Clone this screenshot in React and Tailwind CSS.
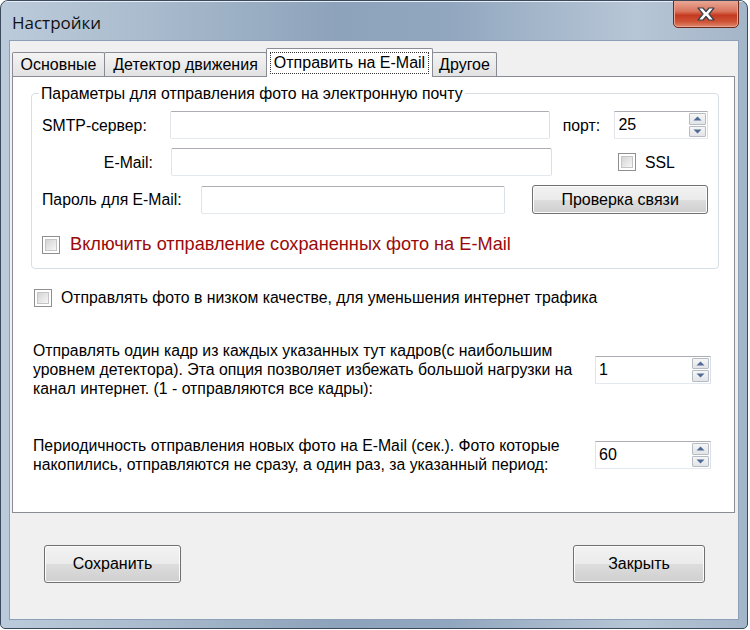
import React from "react";

function TextBox({ className = "" }) {
  return (
    <div
      className={`h-[28px] bg-white border border-[#abadb3] border-l-[#e2e3ea] border-r-[#dbdfe6] border-b-[#e3e9ef] rounded-[2px] ${className}`}
    />
  );
}

function Arrow({ up }) {
  return (
    <svg width="9" height="5" viewBox="0 0 9 5">
      {up ? (
        <path d="M0.5 4.5 L4.5 0.5 L8.5 4.5 Z" fill="#4f6a96" />
      ) : (
        <path d="M0.5 0.5 L4.5 4.5 L8.5 0.5 Z" fill="#4f6a96" />
      )}
    </svg>
  );
}

function Spinner({ className = "", value }) {
  return (
    <div
      className={`h-[28px] flex bg-white border border-[#abadb3] border-l-[#e2e3ea] border-r-[#dbdfe6] border-b-[#e3e9ef] ${className}`}
    >
      <div className="flex-1 pl-[3px] text-[16px] leading-[25px] text-black">{value}</div>
      <div className="w-[19px] flex flex-col p-[1px] gap-[1px]">
        <div className="flex-1 flex items-center justify-center border border-[#b6bcc6] rounded-[1px] bg-[linear-gradient(to_bottom,#f6f6f6,#e2e4e8)]">
          <Arrow up />
        </div>
        <div className="flex-1 flex items-center justify-center border border-[#b6bcc6] rounded-[1px] bg-[linear-gradient(to_bottom,#f6f6f6,#e2e4e8)]">
          <Arrow />
        </div>
      </div>
    </div>
  );
}

function Check() {
  return (
    <div className="w-[18px] h-[18px] shrink-0 border border-[#8e8f8f] bg-white p-[2px]">
      <div className="w-full h-full border border-[#c5c5c5] bg-[linear-gradient(135deg,#d4d4d4,#f7f7f7)]" />
    </div>
  );
}

function Btn({ className = "", children }) {
  return (
    <div
      className={`flex items-center justify-center border border-[#707070] rounded-[3px] shadow-[inset_0_0_0_1px_#fcfcfc] bg-[linear-gradient(to_bottom,#f2f2f2_0%,#ebebeb_50%,#dddddd_51%,#cfcfcf_100%)] text-[16px] text-black ${className}`}
    >
      {children}
    </div>
  );
}

export default function App() {
  return (
    <div className="w-[750px] h-[630px] bg-white font-['Liberation_Sans',Arial,sans-serif] text-black">
      <div className="w-[748px] h-[629px] flex flex-col rounded-t-[8px] rounded-b-[5px] border border-[#3b4a5c] bg-[linear-gradient(to_right,#bccbdb_0%,#a9bbcd_20%,#8da3bb_45%,#91a7bf_60%,#b7c6d6_85%,#a3b5c8_100%)] overflow-hidden">
        {/* Title bar */}
        <div className="h-[39px] flex items-start shrink-0 shadow-[inset_0_1px_0_#e6edf5]">
          <div className="pl-[11px] pt-[12px] text-[17px] leading-[20px] text-[#111] font-['Open_Sans','Noto_Sans',sans-serif]">
            Настройки
          </div>
          <div className="ml-auto mr-[8px] w-[66px] h-[28px] -mt-[1px] rounded-b-[5px] border border-[#6b2a1e] shadow-[inset_0_0_0_1px_#eba38f] bg-[linear-gradient(to_bottom,#e8a896_0%,#d9735c_40%,#c43a20_55%,#cf5437_80%,#dd8a70_100%)] flex items-center justify-center">
            <svg width="22" height="16" viewBox="0 0 22 16">
              <path
                d="M3 2 H8 L11 5.5 L14 2 H19 L14 8 L19 14 H14 L11 10.5 L8 14 H3 L8 8 Z"
                fill="#ffffff"
                stroke="#3a3f49"
                strokeWidth="1.2"
                strokeLinejoin="round"
              />
            </svg>
          </div>
        </div>

        {/* Client area */}
        <div className="mx-[8px] mb-[8px] flex-1 flex flex-col border border-[#8ba0b6] bg-[#f0f0f0]">
          {/* Tab strip */}
          <div className="ml-[2px] mt-[7px] h-[28px] flex items-end text-[16px] relative z-10">
            <div className="h-[24px] w-[93px] flex items-center justify-center border border-[#898c95] border-b-0 rounded-t-[2px] bg-[linear-gradient(to_bottom,#f4f4f4,#e2e2e2)]">
              Основные
            </div>
            <div className="h-[24px] w-[163px] -ml-[1px] flex items-center justify-center border border-[#898c95] border-b-0 rounded-t-[2px] bg-[linear-gradient(to_bottom,#f4f4f4,#e2e2e2)]">
              Детектор движения
            </div>
            <div className="h-[29px] w-[167px] -ml-[1px] -mb-[1px] flex items-center justify-center border border-[#898c95] border-b-0 rounded-t-[2px] bg-white">
              <div className="border border-dotted border-[#333] px-[3px] h-[22px] flex items-center">
                Отправить на E-Mail
              </div>
            </div>
            <div className="h-[24px] w-[65px] -ml-[1px] flex items-center justify-center border border-[#898c95] border-b-0 rounded-t-[2px] bg-[linear-gradient(to_bottom,#f4f4f4,#e2e2e2)]">
              Другое
            </div>
          </div>

          {/* Tab panel */}
          <div className="ml-[2px] w-[723px] h-[437px] border border-[#898c95] bg-white text-[15.8px] leading-[19px]">
            {/* Group box */}
            <div className="relative ml-[18px] mt-[16px] w-[688px] h-[176px] border border-[#d5dfe5] rounded-[4px] px-[10px] pt-[17px]">
              <div className="absolute left-[7px] -top-[10px] bg-white px-[2px] leading-[19px]">
                Параметры для отправления фото на электронную почту
              </div>

              <div className="flex items-center h-[28px]">
                <div className="w-[129px]">SMTP-сервер:</div>
                <TextBox className="w-[381px]" />
                <div className="w-[65px] pl-[13px]">порт:</div>
                <Spinner className="w-[94px]" value="25" />
              </div>

              <div className="flex items-center h-[28px] mt-[9px]">
                <div className="w-[129px] text-right pr-[18px]">E-Mail:</div>
                <TextBox className="w-[381px]" />
                <div className="ml-[66px] flex items-center gap-[9px]">
                  <Check />
                  <span>SSL</span>
                </div>
              </div>

              <div className="flex items-center h-[29px] mt-[9px]">
                <div className="w-[159px]">Пароль для E-Mail:</div>
                <TextBox className="w-[305px]" />
                <Btn className="ml-[27px] w-[176px] h-[29px]">Проверка связи</Btn>
              </div>

              <div className="flex items-center mt-[21px] gap-[10px]">
                <Check />
                <span className="text-[#9a0a0a] text-[18.2px]">
                  Включить отправление сохраненных фото на E-Mail
                </span>
              </div>
            </div>

            <div className="flex items-center ml-[21px] mt-[19px] gap-[9px]">
              <Check />
              <span>Отправлять фото в низком качестве, для уменьшения интернет трафика</span>
            </div>

            <div className="flex items-center ml-[20px] mt-[34px]">
              <div className="w-[562px]">
                Отправлять один кадр из каждых указанных тут кадров(с наибольшим
                <br />
                уровнем детектора). Эта опция позволяет избежать большой нагрузки на
                <br />
                канал интернет. (1 - отправляются все кадры):
              </div>
              <Spinner className="w-[116px]" value="1" />
            </div>

            <div className="flex items-center ml-[20px] mt-[38px]">
              <div className="w-[562px]">
                Периодичность отправления новых фото на E-Mail (сек.). Фото которые
                <br />
                накопились, отправляются не сразу, а один раз, за указанный период:
              </div>
              <Spinner className="w-[116px]" value="60" />
            </div>
          </div>

          {/* Buttons */}
          <div className="flex justify-between mt-[32px] pl-[34px] pr-[33px]">
            <Btn className="w-[137px] h-[38px]">Сохранить</Btn>
            <Btn className="w-[132px] h-[38px]">Закрыть</Btn>
          </div>
        </div>
      </div>
    </div>
  );
}
